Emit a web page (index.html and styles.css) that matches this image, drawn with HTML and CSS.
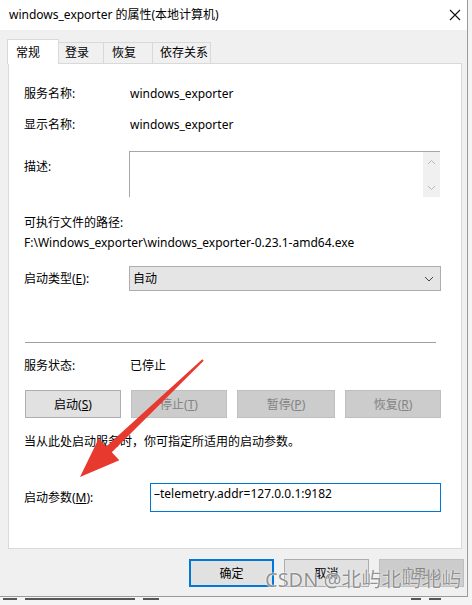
FILE: index.html
```html
<!DOCTYPE html>
<html lang="zh-CN">

<head>
    <meta charset="UTF-8">
    <meta name="viewport" content="width=device-width, initial-scale=1.0">
    <title>windows_exporter 的属性</title>
    <link rel="stylesheet" href="styles.css">
</head>

<body>

    <div class="dialog">

        <div class="titlebar">
            <span class="title">windows_exporter 的属性(本地计算机)</span>
            <svg class="close" width="12" height="12" viewBox="0 0 12 12">
                <path d="M1 1 L11 11 M11 1 L1 11" stroke="#111" stroke-width="1.1" fill="none" />
            </svg>
        </div>

        <div class="tabs">
            <div class="tab active">常规</div>
            <div class="tab tab-login">登录</div>
            <div class="tab tab-recover">恢复</div>
            <div class="tab tab-deps">依存关系</div>
        </div>

        <div class="panel">
            <div class="field row-name">
                <span class="label">服务名称:</span>
                <span class="value">windows_exporter</span>
            </div>
            <div class="field row-display">
                <span class="label">显示名称:</span>
                <span class="value">windows_exporter</span>
            </div>
            <div class="field row-desc">
                <span class="label label-desc">描述:</span>
                <div class="desc-box">
                    <div class="scrollbar">
                        <svg width="9" height="6" viewBox="0 0 9 6"><path d="M1 5 L4.5 1.5 L8 5" stroke="#b8b8b8" fill="none" /></svg>
                        <svg width="9" height="6" viewBox="0 0 9 6"><path d="M1 1 L4.5 4.5 L8 1" stroke="#b8b8b8" fill="none" /></svg>
                    </div>
                </div>
            </div>

            <div class="path-label">可执行文件的路径:</div>
            <div class="path-value">F:\Windows_exporter\windows_exporter-0.23.1-amd64.exe</div>

            <div class="field row-type">
                <span class="label label-type">启动类型(<u>E</u>):</span>
                <div class="select">
                    <span>自动</span>
                    <svg width="10" height="6" viewBox="0 0 10 6"><path d="M1 1 L5 5 L9 1" stroke="#444" fill="none" /></svg>
                </div>
            </div>

            <div class="separator"></div>

            <div class="field row-status">
                <span class="label">服务状态:</span>
                <span class="value">已停止</span>
            </div>

            <div class="actions">
                <button type="button" class="btn">启动(<u>S</u>)</button>
                <button type="button" class="btn disabled">停止(<u>T</u>)</button>
                <button type="button" class="btn disabled">暂停(<u>P</u>)</button>
                <button type="button" class="btn disabled">恢复(<u>R</u>)</button>
            </div>

            <div class="note">当从此处启动服务时，你可指定所适用的启动参数。</div>

            <div class="field row-param">
                <span class="label label-param">启动参数(<u>M</u>):</span>
                <div class="param-input">–telemetry.addr=127.0.0.1:9182</div>
            </div>
        </div>

        <div class="footer">
            <button type="button" class="btn btn-foot default">确定</button>
            <button type="button" class="btn btn-foot">取消</button>
            <button type="button" class="btn btn-foot disabled">应用(<u>A</u>)</button>
        </div>

        <!-- red annotation arrow drawn over the dialog -->
        <svg class="arrow" width="468" height="596" viewBox="0 0 468 596">
            <polygon fill="#e8392f"
                points="203.7,360.7 111.8,452.3 119.3,460.3 80,477 98.7,438.5 106.2,446.5 202.3,359.3" />
        </svg>

        <div class="watermark">CSDN @北屿北屿北屿</div>
    </div>

    <!-- the window behind the dialog, only the tops of its row show -->
    <div class="behind">
        <span class="mark w14"></span>
        <span class="mark w110"></span>
        <span class="mark w16"></span>
        <span class="mark gap w10"></span>
        <span class="mark w12"></span>
    </div>

</body>

</html>
```

FILE: styles.css
```css
body {
    margin: 0;
    width: 472px;
    height: 605px;
    overflow: hidden;
    background: #f4f4f4;
    font-family: "Noto Sans", "Noto Sans CJK SC", sans-serif;
    font-size: 12px;
    color: #000;
}

.dialog {
    position: relative;
    width: 468px;
    height: 597px;
    background: #f0f0f0;
    border-right: 1px solid #9a9a9a;
    border-bottom: 1px solid #9a9a9a;
    box-sizing: border-box;
}

.titlebar {
    height: 30px;
    background: #fff;
    display: flex;
    align-items: center;
    justify-content: space-between;
    padding: 0 6px 0 9px;
    line-height: 16px;
}

/* tabs */

.tabs {
    display: flex;
    align-items: flex-end;
    height: 33px;
    padding-left: 7px;
    box-sizing: border-box;
}

.tab {
    height: 21px;
    line-height: 20px;
    border: 1px solid #d9d9d9;
    border-bottom: none;
    border-left: none;
    box-sizing: border-box;
    background: #f0f0f0;
    padding-left: 6px;
}

.tab.active {
    height: 25px;
    width: 52px;
    background: #fff;
    border-left: 1px solid #d9d9d9;
    padding-left: 8px;
    line-height: 26px;
    margin-bottom: -1px;
    position: relative;
    z-index: 1;
}

.tab-login {
    width: 45px;
}

.tab-recover {
    width: 49px;
    padding-left: 8px;
}

.tab-deps {
    width: 58px;
    padding-left: 7px;
}

/* main panel */

.panel {
    margin-left: 8px;
    width: 454px;
    height: 486px;
    background: #fff;
    border: 1px solid #d9d9d9;
    box-sizing: border-box;
    padding: 22px 20px 0 15px;
}

.field {
    display: flex;
    align-items: flex-start;
    line-height: 16px;
}

.label {
    width: 106px;
    flex-shrink: 0;
}

.row-display {
    margin-top: 15px;
}

.row-desc {
    margin-top: 18px;
}

.label-desc {
    width: 105px;
    margin-top: 8px;
}

.desc-box {
    width: 311px;
    height: 46px;
    border-top: 1px solid #a6a6a6;
    border-left: 1px solid #a6a6a6;
    box-sizing: border-box;
    display: flex;
    justify-content: flex-end;
}

.scrollbar {
    width: 17px;
    background: #f0f0f0;
    display: flex;
    flex-direction: column;
    align-items: center;
    justify-content: space-between;
    padding: 7px 0 6px;
}

.path-label {
    margin-top: 18px;
    line-height: 16px;
}

.path-value {
    margin-top: 4px;
    line-height: 16px;
}

.row-type {
    margin-top: 15px;
    align-items: center;
}

.label-type {
    width: 105px;
}

.select {
    width: 312px;
    height: 25px;
    background: #e5e5e5;
    border: 1px solid #adadad;
    box-sizing: border-box;
    display: flex;
    align-items: center;
    justify-content: space-between;
    padding: 0 6px 0 3px;
}

.separator {
    margin: 51px 5px 0 1px;
    border-top: 1px solid #a0a0a0;
}

.row-status {
    margin-top: 15px;
}

/* buttons */

.actions {
    margin: 16px 0 0 1px;
    display: grid;
    grid-template-columns: 96px 96px 98px 96px;
    justify-content: space-between;
}

.btn {
    height: 28px;
    background: #e1e1e1;
    border: 1px solid #adadad;
    font-family: "Noto Sans", "Noto Sans CJK SC", sans-serif;
    font-size: 12px;
    color: #000;
    padding: 0;
    cursor: pointer;
}

.btn.disabled {
    background: #cccccc;
    border-color: #bfbfbf;
    color: #838383;
}

.note {
    margin-top: 16px;
    line-height: 16px;
}

.row-param {
    margin-top: 33px;
    align-items: center;
}

.label-param {
    width: 126px;
}

.param-input {
    width: 291px;
    height: 29px;
    border: 1px solid #0078d7;
    box-sizing: border-box;
    padding: 1px 3px;
    line-height: 18px;
}

/* footer */

.footer {
    display: flex;
    justify-content: flex-end;
    gap: 10px;
    padding: 10px 3px 0 0;
}

.btn-foot {
    width: 85px;
}

.btn-foot.default {
    border: 2px solid #0078d7;
}

/* overlays */

.arrow {
    position: absolute;
    left: 0;
    top: 0;
    pointer-events: none;
}

.watermark {
    position: absolute;
    left: 265px;
    top: 566px;
    font-size: 20px;
    line-height: 28px;
    color: rgba(110, 110, 110, 0.75);
    text-shadow: 0 0 2px #fff, 0 0 1px #fff;
    white-space: nowrap;
    pointer-events: none;
}

.behind {
    height: 8px;
    display: flex;
    align-items: flex-start;
    gap: 8px;
    padding: 1px 0 0 3px;
    box-sizing: border-box;
}

.mark {
    height: 2px;
    background: #555;
}

.mark.gap {
    margin-left: 244px;
}

.w10 { width: 10px; }
.w12 { width: 12px; }
.w14 { width: 14px; }
.w16 { width: 16px; }
.w110 { width: 110px; }
```
